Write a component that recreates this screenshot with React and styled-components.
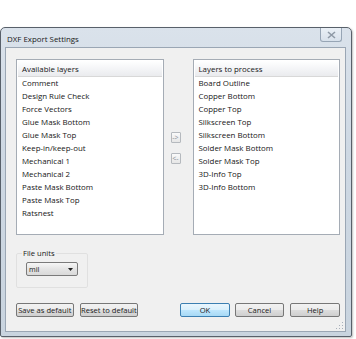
import styled, { createGlobalStyle } from 'styled-components';

const GlobalStyle = createGlobalStyle`
  html, body {
    margin: 0;
    padding: 0;
    background: #ffffff;
  }
  body {
    font-family: "Open Sans", "Noto Sans", sans-serif;
    color: #161616;
  }
`;

const Page = styled.div`
  width: 356px;
  height: 339px;
  padding-top: 27px;
  box-sizing: border-box;
  overflow: hidden;
`;

const Window = styled.div`
  width: 352px;
  height: 310px;
  box-sizing: border-box;
  border: 1px solid #58606a;
  border-radius: 5px 5px 2px 2px;
  background: linear-gradient(#dae2eb, #ced8e3 40%, #c9d4df);
  padding: 0 5px 4px 4px;
  display: flex;
  flex-direction: column;
  box-shadow: 1px 1px 2px rgba(0, 0, 0, 0.25);
`;

const TitleBar = styled.div`
  height: 19px;
  display: flex;
  align-items: flex-start;
  justify-content: space-between;
`;

const Title = styled.span`
  font-size: 7.9px;
  line-height: 11px;
  margin: 6px 0 0 2px;
  color: #1a1a1a;
`;

const CloseButton = styled.div`
  width: 22px;
  height: 14px;
  margin-right: 4px;
  box-sizing: border-box;
  border: 1px solid #97a5b5;
  border-top: none;
  border-radius: 0 0 3px 3px;
  background: linear-gradient(#eaf0f6, #d8e1eb);
  display: flex;
  align-items: center;
  justify-content: center;
`;

const Client = styled.div`
  flex: 1;
  background: #f0f0f0;
  border: 1px solid #9aa6b4;
  padding: 11px 5px 0 10px;
  display: flex;
  flex-direction: column;
  position: relative;
`;

const ListsRow = styled.div`
  display: flex;
  align-items: flex-start;
`;

const ListBox = styled.div`
  width: 148px;
  height: 176px;
  box-sizing: border-box;
  border: 1px solid #a5acb5;
  background: #ffffff;
  padding: 1px;
`;

const ListHeader = styled.div`
  height: 15px;
  background: linear-gradient(#ffffff, #f4f5f7 50%, #eaebee);
  border-bottom: 1px solid #d8d8d8;
  font-size: 7.9px;
  line-height: 16px;
  padding-left: 4px;
`;

const Item = styled.div`
  height: 13px;
  line-height: 13px;
  font-size: 7.9px;
  padding-left: 4px;
  white-space: nowrap;
`;

const ArrowColumn = styled.div`
  width: 10px;
  margin: 73px 12px 0 7px;
  display: flex;
  flex-direction: column;
  gap: 10px;
`;

const SmallButton = styled.div`
  width: 10px;
  height: 11px;
  box-sizing: border-box;
  border: 1px solid #b5b9be;
  border-radius: 1px;
  background: linear-gradient(#fafafa, #e6e6e6);
  font-size: 7px;
  line-height: 9px;
  text-align: center;
  color: #8a8f96;
`;

const GroupBox = styled.fieldset`
  width: 72px;
  height: 40px;
  box-sizing: border-box;
  margin: 13px 0 0 0;
  padding: 0 0 0 9px;
  border: 1px solid #e0e0e0;
  border-radius: 2px;
`;

const Legend = styled.legend`
  font-size: 7.6px;
  padding: 0 1px;
  margin-left: -4px;
  line-height: 10px;
`;

const Select = styled.div`
  width: 52px;
  height: 14px;
  margin-top: 4px;
  box-sizing: border-box;
  border: 1px solid #7a7a7a;
  border-radius: 2px;
  background: linear-gradient(#f6f6f6, #e4e4e4 50%, #d9d9d9);
  display: flex;
  align-items: center;
  justify-content: space-between;
  padding: 0 4px 0 2px;
  font-size: 7.2px;
`;

const ButtonRow = styled.div`
  display: flex;
  margin-top: 15px;
`;

const Button = styled.div`
  width: ${(p) => p.$w}px;
  height: 14px;
  box-sizing: border-box;
  margin-right: ${(p) => p.$gap || 0}px;
  border: 1px solid ${(p) => (p.$primary ? '#3c7fb1' : '#777')};
  border-radius: 2px;
  background: ${(p) =>
    p.$primary
      ? 'linear-gradient(#eaf6fd, #d9f0fc 50%, #bee6fd 51%, #a7d9f5)'
      : 'linear-gradient(#f2f2f2, #ebebeb 50%, #dddddd 51%, #cfcfcf)'};
  font-size: 7.6px;
  line-height: 12px;
  text-align: center;
  white-space: nowrap;
  color: #1a1a1a;
`;

const Grip = styled.svg`
  position: absolute;
  right: 1px;
  bottom: 1px;
`;

const available = [
  'Comment',
  'Design Rule Check',
  'Force Vectors',
  'Glue Mask Bottom',
  'Glue Mask Top',
  'Keep-in/keep-out',
  'Mechanical 1',
  'Mechanical 2',
  'Paste Mask Bottom',
  'Paste Mask Top',
  'Ratsnest',
];

const toProcess = [
  'Board Outline',
  'Copper Bottom',
  'Copper Top',
  'Silkscreen Top',
  'Silkscreen Bottom',
  'Solder Mask Bottom',
  'Solder Mask Top',
  '3D-Info Top',
  '3D-Info Bottom',
];

export default function App() {
  return (
    <>
      <GlobalStyle />
      <Page>
        <Window>
          <TitleBar>
            <Title>DXF Export Settings</Title>
            <CloseButton>
              <svg width="9" height="8" viewBox="0 0 9 8">
                <path d="M1 1 L8 7 M8 1 L1 7" stroke="#8e99a6" strokeWidth="1.6" fill="none" />
              </svg>
            </CloseButton>
          </TitleBar>
          <Client>
            <ListsRow>
              <ListBox>
                <ListHeader>Available layers</ListHeader>
                {available.map((l) => (
                  <Item key={l}>{l}</Item>
                ))}
              </ListBox>
              <ArrowColumn>
                <SmallButton>-&gt;</SmallButton>
                <SmallButton>&lt;-</SmallButton>
              </ArrowColumn>
              <ListBox>
                <ListHeader>Layers to process</ListHeader>
                {toProcess.map((l) => (
                  <Item key={l}>{l}</Item>
                ))}
              </ListBox>
            </ListsRow>
            <GroupBox>
              <Legend>File units</Legend>
              <Select>
                <span>mil</span>
                <svg width="5" height="3" viewBox="0 0 5 3">
                  <path d="M0 0 L5 0 L2.5 3 Z" fill="#222" />
                </svg>
              </Select>
            </GroupBox>
            <ButtonRow>
              <Button $w={58} $gap={6}>Save as default</Button>
              <Button $w={59} $gap={42}>Reset to default</Button>
              <Button $w={50} $gap={5} $primary>OK</Button>
              <Button $w={50} $gap={6}>Cancel</Button>
              <Button $w={50}>Help</Button>
            </ButtonRow>
            <Grip width="8" height="8" viewBox="0 0 8 8">
              <g fill="#a8b0ba">
                <rect x="6" y="0" width="1" height="1" />
                <rect x="3" y="3" width="1" height="1" />
                <rect x="6" y="3" width="1" height="1" />
                <rect x="0" y="6" width="1" height="1" />
                <rect x="3" y="6" width="1" height="1" />
                <rect x="6" y="6" width="1" height="1" />
              </g>
            </Grip>
          </Client>
        </Window>
      </Page>
    </>
  );
}
